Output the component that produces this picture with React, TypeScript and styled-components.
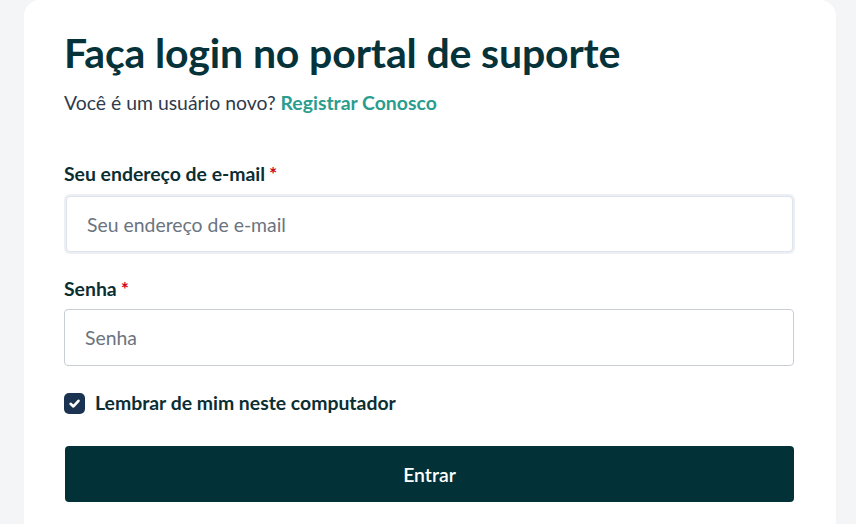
import React from "react";
import styled, {createGlobalStyle} from "styled-components";

const GlobalStyle = createGlobalStyle`
  html, body {
    margin: 0;
    padding: 0;
    background: #f4f5f7;
    font-family: Lato, "Liberation Sans", sans-serif;
    overflow: hidden;
  }
`

const Page = styled.div`
  height: 524px;
  padding: 0 20px 0 24px;
`

const Card = styled.div`
  background: #fff;
  border-radius: 16px 16px 0 0;
  width: 812px;
  min-height: 100%;
  box-sizing: border-box;
  padding: 28px 40px 0 40px;
  display: flex;
  flex-direction: column;

  > * {
    flex-shrink: 0;
  }
`

const Title = styled.h1`
  margin: 0;
  font-size: 41px;
  line-height: 50px;
  font-weight: 700;
  color: #06323a;
  letter-spacing: -0.15px;
`

const Subtitle = styled.p`
  margin: 13px 0 0;
  font-size: 19.4px;
  line-height: 24px;
  color: #2f3b4b;

  a {
    color: #2a9d8f;
    font-weight: 700;
    text-decoration: none;
  }
`

const Field = styled.div<{$first?: boolean}>`
  display: flex;
  flex-direction: column;
  margin-top: ${p => p.$first ? "47px" : "23px"};
`

const Label = styled.label`
  font-size: 19.4px;
  line-height: 24px;
  font-weight: 700;
  color: #0b2e33;
  margin-bottom: 8px;

  span {
    color: #d0021b;
    margin-left: 4px;
  }
`

const Input = styled.input<{$focused?: boolean}>`
  box-sizing: border-box;
  height: ${p => p.$focused ? "56px" : "57px"};
  width: ${p => p.$focused ? "727px" : "730px"};
  margin: ${p => p.$focused ? "2px 0 2px 2px" : "0"};
  padding: 0 20px;
  border: 1px solid ${p => p.$focused ? "#dfe3ea" : "#c9ced6"};
  border-radius: 4px;
  box-shadow: ${p => p.$focused ? "0 0 0 2px #eceff4" : "none"};
  font-family: inherit;
  font-size: 19.4px;
  color: #1f2937;
  outline: none;
  caret-color: #1f2937;

  &::placeholder {
    color: #6b7480;
  }
`

const CheckRow = styled.label`
  display: flex;
  align-items: center;
  gap: 10px;
  margin-top: 25px;
  font-size: 19.4px;
  line-height: 24px;
  font-weight: 700;
  color: #0b2e33;
`

const Box = styled.span`
  width: 21px;
  height: 21px;
  border-radius: 5px;
  background: #1a3350;
  display: flex;
  align-items: center;
  justify-content: center;
`

const Button = styled.button`
  margin-top: 31px;
  margin-left: 1px;
  width: 729px;
  height: 56px;
  border: none;
  border-radius: 4px;
  background: #023137;
  color: #fff;
  font-family: inherit;
  font-size: 19.4px;
  font-weight: 600;
`

const Footer = styled.p`
  margin: 18px 0 0;
  text-align: center;
  font-size: 19.4px;
  color: #4b5563;
`

export default function App() {
  return (
    <Page>
      <GlobalStyle/>
      <Card>
        <Title>Faça login no portal de suporte</Title>
        <Subtitle>Você é um usuário novo? <a href="#">Registrar Conosco</a></Subtitle>
        <Field $first>
          <Label>Seu endereço de e-mail<span>*</span></Label>
          <Input $focused autoFocus placeholder="Seu endereço de e-mail"/>
        </Field>
        <Field>
          <Label>Senha<span>*</span></Label>
          <Input type="password" placeholder="Senha"/>
        </Field>
        <CheckRow>
          <Box>
            <svg width="13" height="13" viewBox="0 0 12 12">
              <path d="M2.4 6.3 L5 8.7 L9.7 3.5" fill="none" stroke="#fff" strokeWidth="2.4" strokeLinecap="round" strokeLinejoin="round"/>
            </svg>
          </Box>
          Lembrar de mim neste computador
        </CheckRow>
        <Button>Entrar</Button>
        <Footer>ou faça login com</Footer>
      </Card>
    </Page>
  )
}
